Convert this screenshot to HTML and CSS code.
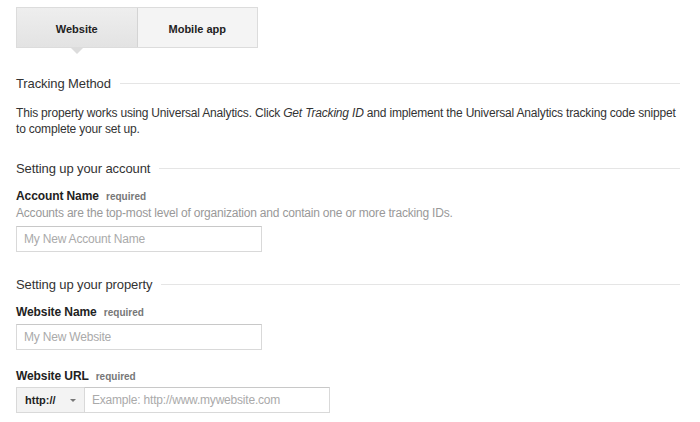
FILE: index.html
```html
<!DOCTYPE html>
<html>
<head>
<meta charset="utf-8">
<link rel="stylesheet" href="styles.css">
</head>
<body>
<div class="page">
  <div class="tabs">
    <div class="tab active">Website</div>
    <div class="tab">Mobile app</div>
  </div>

  <div class="section-head s1"><span>Tracking Method</span><div class="rule"></div></div>
  <p class="desc">This property works using Universal Analytics. Click <i>Get Tracking ID</i> and implement the Universal Analytics tracking code snippet to complete your set up.</p>

  <div class="section-head s2"><span>Setting up your account</span><div class="rule"></div></div>
  <div class="label">Account Name <span class="req">required</span></div>
  <div class="hint">Accounts are the top-most level of organization and contain one or more tracking IDs.</div>
  <input class="field" type="text" placeholder="My New Account Name">

  <div class="section-head s3"><span>Setting up your property</span><div class="rule"></div></div>
  <div class="label">Website Name <span class="req">required</span></div>
  <input class="field tight" type="text" placeholder="My New Website">

  <div class="label l3">Website URL <span class="req">required</span></div>
  <div class="url-row">
    <div class="select">http:// <span class="caret"></span></div>
    <input class="field url" type="text" placeholder="Example: http://www.mywebsite.com">
  </div>
</div>
</body>
</html>
```
FILE: styles.css
```css
html, body { margin: 0; padding: 0; background: #fff; }
body { font-family: "Liberation Sans", Arial, sans-serif; color: #333; }
.page { padding: 7px 20px 0 16px; }
.tabs { display: flex; width: 242px; height: 41px; box-sizing: border-box; border: 1px solid #dcdcdc; }
.tab { flex: 1; display: flex; align-items: center; justify-content: center; font-size: 11px; font-weight: bold; color: #222; background: #f4f4f4; position: relative; padding-top: 2px; }
.tab.active { background: linear-gradient(#eeeeee, #e3e3e3); border-right: 1px solid #d4d4d4; }
.tab.active::after { content: ""; position: absolute; left: 50%; bottom: -7px; margin-left: -6px; border-left: 6px solid transparent; border-right: 6px solid transparent; border-top: 6px solid #dcdcdc; }
.section-head { display: flex; align-items: center; font-size: 13px; color: #333; height: 16px; letter-spacing: -0.1px; }
.section-head .rule { flex: 1; height: 1px; background: #e5e5e5; margin-left: 9px; margin-top: 1px; }
.section-head.s1 { margin-top: 27px; }
.section-head.s2 { margin-top: 23px; }
.section-head.s3 { margin-top: 24px; }
.desc { margin: 14px 0 0; font-size: 12px; line-height: 16px; color: #333; letter-spacing: -0.18px; }
.label { font-size: 12px; font-weight: bold; color: #222; margin-top: 13px; line-height: 15px; letter-spacing: -0.1px; }
.label.l3 { margin-top: 19px; }
.req { font-size: 10px; color: #777; margin-left: 4px; letter-spacing: 0; }
.hint { font-size: 12px; color: #999; line-height: 16px; margin-top: 1px; letter-spacing: -0.2px; }
.field { display: block; box-sizing: border-box; width: 246px; height: 26px; margin: 5px 0 0; padding: 0 7px; border: 1px solid #d9d9d9; border-top-color: #c8c8c8; font-family: "Liberation Sans", Arial, sans-serif; font-size: 12px; letter-spacing: -0.2px; color: #333; outline: none; }
.field.tight { margin-top: 4px; }
.field::placeholder { color: #aaa; }
.url-row { display: flex; margin-top: 3px; }
.url-row .field { margin: 0; }
.select { box-sizing: border-box; width: 68px; height: 26px; display: flex; align-items: center; padding-left: 8px; font-size: 11px; font-weight: bold; color: #222; background: #f3f3f3; border: 1px solid #d9d9d9; border-right: none; }
.caret { margin-left: 14px; width: 0; height: 0; border-left: 3px solid transparent; border-right: 3px solid transparent; border-top: 3px solid #777; margin-top: 1px; }
.field.url { width: 246px; }
```
